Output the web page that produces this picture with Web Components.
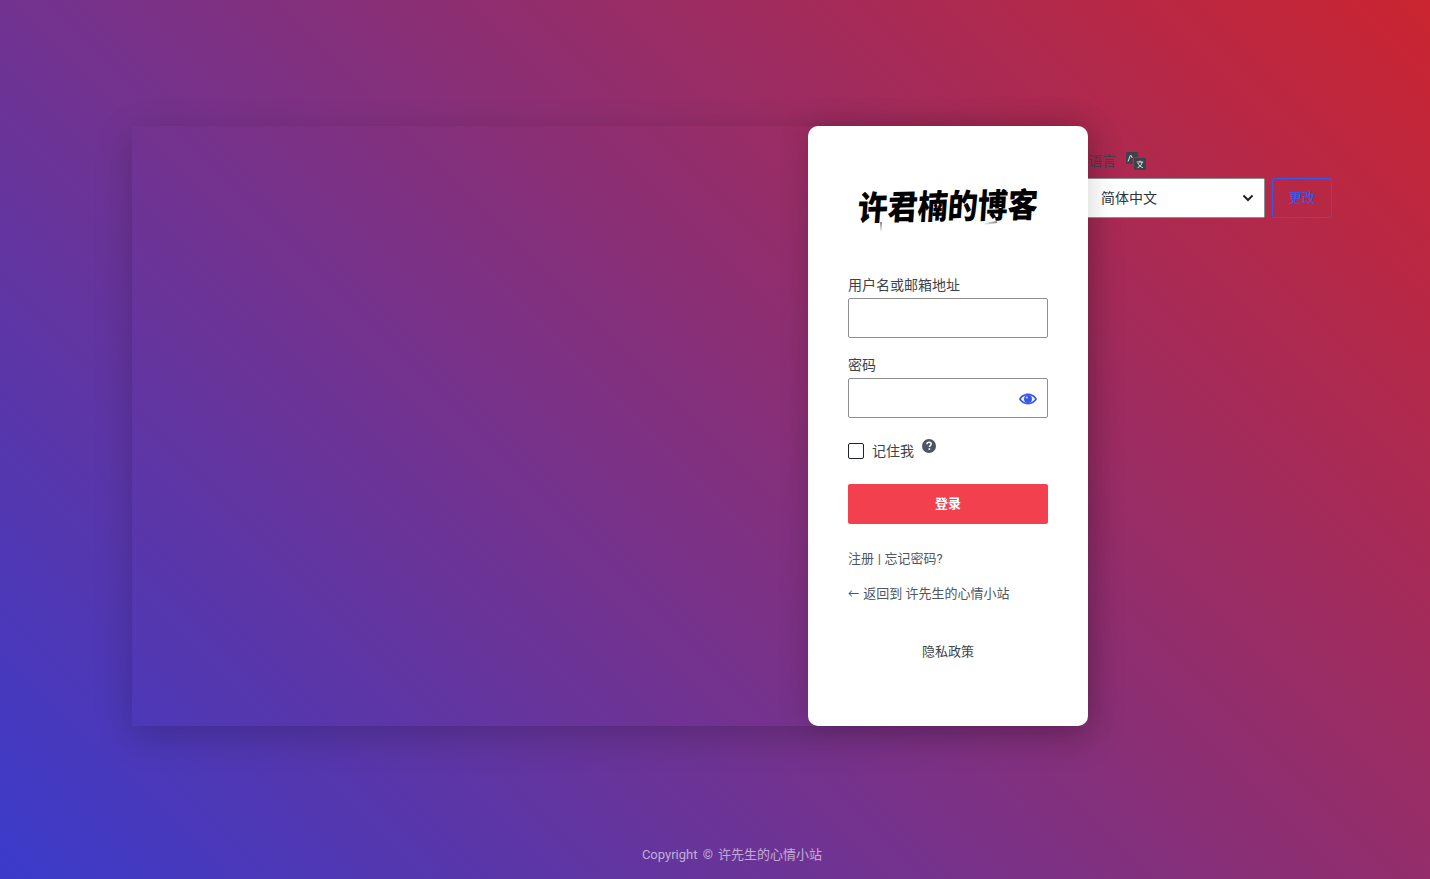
<!DOCTYPE html>
<html lang="zh-CN">
<head>
<meta charset="utf-8">
<title>登录</title>
<style>
    html, body { margin: 0; height: 100%; }
    body {
        height: 879px;
        overflow: hidden;
        background: linear-gradient(45deg, #3a3bcb 0%, #cb2530 100%);
        font-family: Roboto, "Noto Sans CJK SC", sans-serif;
        font-size: 14px;
        color: #3c434a;
    }
</style>
</head>
<body>
<login-page>
    <login-form>
        <lang-switcher slot="lang"></lang-switcher>
    </login-form>
    <span slot="footer">Copyright © 许先生的心情小站</span>
</login-page>

<script>
(function() {
    class LoginPage extends HTMLElement {
        constructor() {
            super();
            this.attachShadow({ mode: "open" }).innerHTML = `
                <style>
                    :host { display: flex; flex-direction: column; height: 879px; padding: 126px 0 0 132px; box-sizing: border-box; }
                    .foot { margin-top: 119px; width: 1200px; text-align: center; font-size: 13px; line-height: 20px; word-spacing: 2px; color: rgba(255,255,255,.6); }
                </style>
                <slot></slot>
                <div class="foot"><slot name="footer"></slot></div>
            `;
        }
    }

    class LoginForm extends HTMLElement {
        constructor() {
            super();
            this.attachShadow({ mode: "open" }).innerHTML = `
                <style>
                    :host { display: flex; position: relative; width: 956px; height: 600px; box-shadow: 0 10px 36px rgba(0,0,0,.2); }
                    .side { flex: 1; }
                    .card { position: relative; z-index: 2; width: 280px; box-sizing: border-box; padding: 0 40px; background: #fff; border-radius: 10px; box-shadow: 0 0 30px rgba(0,0,0,.18); display: flex; flex-direction: column; }
                    .logo { position: relative; height: 152px; display: flex; align-items: center; justify-content: center; }
                    .logo span { display: block; font: 900 30px/40px "Noto Sans CJK SC", sans-serif; color: #000; transform: translateY(2px) skew(-4deg, -1deg) scaleY(1.12); white-space: nowrap; }
                    /* brush tails under the logo */
                    .logo::before, .logo::after { content: ""; position: absolute; }
                    .logo::before { left: 32px; top: 96px; width: 2px; height: 10px; background: linear-gradient(#888, rgba(0,0,0,0)); }
                    .logo::after { left: 135px; top: 96px; width: 14px; height: 1.500px; background: linear-gradient(to left, #888, rgba(0,0,0,0)); transform: rotate(-8deg); }
                    .lbl { margin: 0 0 6px; font-size: 14px; line-height: 14px; height: 14px; display: block; color: #3c434a; }
                    .lbl.second { margin-top: 20px; }
                    .remember { display: flex; align-items: flex-start; margin-top: 23px; height: 43px; font-size: 14px; line-height: 20px; }
                    .remember i { display: block; box-sizing: border-box; width: 16px; height: 16px; margin: 2px 8px 0 0; border: 1px solid #1d2327; border-radius: 2px; background: #fff; }
                    .remember svg { margin: -2px 0 0 8px; }
                    .btn { height: 40px; border-radius: 2px; background: #f3404f; color: #fff; font-weight: 700; font-size: 13px; line-height: 40px; text-align: center; }
                    .links { margin-top: 25px; font-size: 13px; line-height: 20px; color: #50575e; word-spacing: .5px; }
                    .links.back { margin-top: 15px; word-spacing: 0; }
                    .links.back b { display: inline-block; width: 12px; font-weight: 400; transform: scaleX(.85); transform-origin: left center; }
                    .privacy { margin-top: 38px; font-size: 13px; line-height: 20px; text-align: center; color: #3c434a; }
                </style>
                <div class="side"></div>
                <div class="card">
                    <div class="logo"><span>许君楠的博客</span></div>
                    <span class="lbl">用户名或邮箱地址</span>
                    <form-input></form-input>
                    <span class="lbl second">密码</span>
                    <form-input eye></form-input>
                    <div class="remember"><i></i><span>记住我</span>
                        <svg width="14" height="14" viewBox="0 0 14 14"><circle cx="7" cy="7" r="7" fill="#4b5563"/><path d="M4.9 5.2C5 3.9 6 3.2 7.1 3.2c1.2 0 2.1.8 2.1 1.9 0 1.5-1.8 1.6-1.8 3" fill="none" stroke="#fff" stroke-width="1.5"/><rect x="6.500" y="9.300" width="1.700" height="1.600" fill="#fff"/></svg>
                    </div>
                    <div class="btn">登录</div>
                    <div class="links">注册 | 忘记密码?</div>
                    <div class="links back"><b>←</b> 返回到 许先生的心情小站</div>
                    <div class="privacy">隐私政策</div>
                </div>
                <slot name="lang"></slot>
            `;
        }
    }

    class FormInput extends HTMLElement {
        constructor() {
            super();
            this.attachShadow({ mode: "open" }).innerHTML = `
                <style>
                    :host { display: block; }
                    .box { position: relative; box-sizing: border-box; height: 40px; border: 1px solid #8c8f94; border-radius: 2px; background: #fff; }
                    input { display: block; box-sizing: border-box; width: 100%; height: 100%; border: 0; padding: 0 8px; background: none; outline: none; }
                    svg { position: absolute; right: 10px; top: 14px; }
                </style>
                <div class="box">
                    <input type="${this.hasAttribute("eye") ? "password" : "text"}">
                    ${this.hasAttribute("eye") ? `<svg width="18" height="12" viewBox="0.4 0.8 17.2 10.4"><path d="M9 .8C5.2.8 2 3 .4 6 2 9 5.2 11.2 9 11.2S16 9 17.6 6C16 3 12.800.8 9 .8zm0 1.500c2.900 0 5.300 1.500 6.700 3.700C14.300 8.200 11.900 9.700 9 9.700S3.700 8.200 2.300 6C3.700 3.800 6.100 2.300 9 2.300z" fill="#3858e9"/><circle cx="9" cy="6" r="3.800" fill="#3858e9"/><circle cx="7.800" cy="4.600" r="1" fill="#c8d0f8"/></svg>` : ""}
                </div>
            `;
        }
    }

    class LangSwitcher extends HTMLElement {
        constructor() {
            super();
            this.attachShadow({ mode: "open" }).innerHTML = `
                <style>
                    :host { display: block; position: absolute; left: 956px; top: 25px; width: 244px; font-size: 14px; color: #3c434a; }
                    .top { display: flex; align-items: center; height: 20px; }
                    .top span { line-height: 20px; }
                    .top svg { margin-left: 10px; }
                    .row { display: flex; margin-top: 7px; height: 40px; }
                    .select { flex: none; width: 177px; box-sizing: border-box; height: 40px; border: 1px solid #8c8f94; border-left: 0; border-radius: 0 2px 2px 0; background: #fff; padding: 0 10px 0 13px; display: flex; align-items: center; justify-content: space-between; color: #2c3338; }
                    .select span { margin-bottom: 2px; }
                    .change { flex: none; width: 60px; margin-left: 7px; box-sizing: border-box; height: 40px; border: 1px solid #3858e9; border-radius: 2px; color: #3858e9; font-size: 13px; line-height: 38px; text-align: center; }
                </style>
                <div class="top">
                    <span>语言</span>
                    <svg width="20" height="18" viewBox="0 0 20 18">
                        <path d="M1.500 0h9A1.500 1.500 0 0 1 12 1.500V5H9A2.500 2.500 0 0 0 6.500 7.500V12h-5A1.500 1.500 0 0 1 0 10.500v-9A1.500 1.500 0 0 1 1.500 0z" fill="#3c434a"/>
                        <rect x="8" y="6" width="12" height="12" rx="1.500" fill="#3c434a"/>
                        <path d="M2 9.500 4.300 3.500h.9L6.200 6" fill="none" stroke="#e4e4e8" stroke-width="1"/>
                        <path d="M10.800 10h6.400M14 8.600V10M11.500 15.700c2.800-1 4.100-3 4.600-5.700M12 11c.8 2.300 2.400 3.900 4.900 4.700" fill="none" stroke="#e4e4e8" stroke-width="1"/>
                    </svg>
                </div>
                <div class="row">
                    <div class="select"><span>简体中文</span>
                        <svg width="12" height="8" viewBox="0 0 12 8"><path d="M1.500 1.500 6 6l4.500-4.500" fill="none" stroke="#1d2327" stroke-width="2"/></svg>
                    </div>
                    <div class="change">更改</div>
                </div>
            `;
        }
    }

    customElements.define("login-page", LoginPage);
    customElements.define("login-form", LoginForm);
    customElements.define("form-input", FormInput);
    customElements.define("lang-switcher", LangSwitcher);
})();
</script>
</body>
</html>
